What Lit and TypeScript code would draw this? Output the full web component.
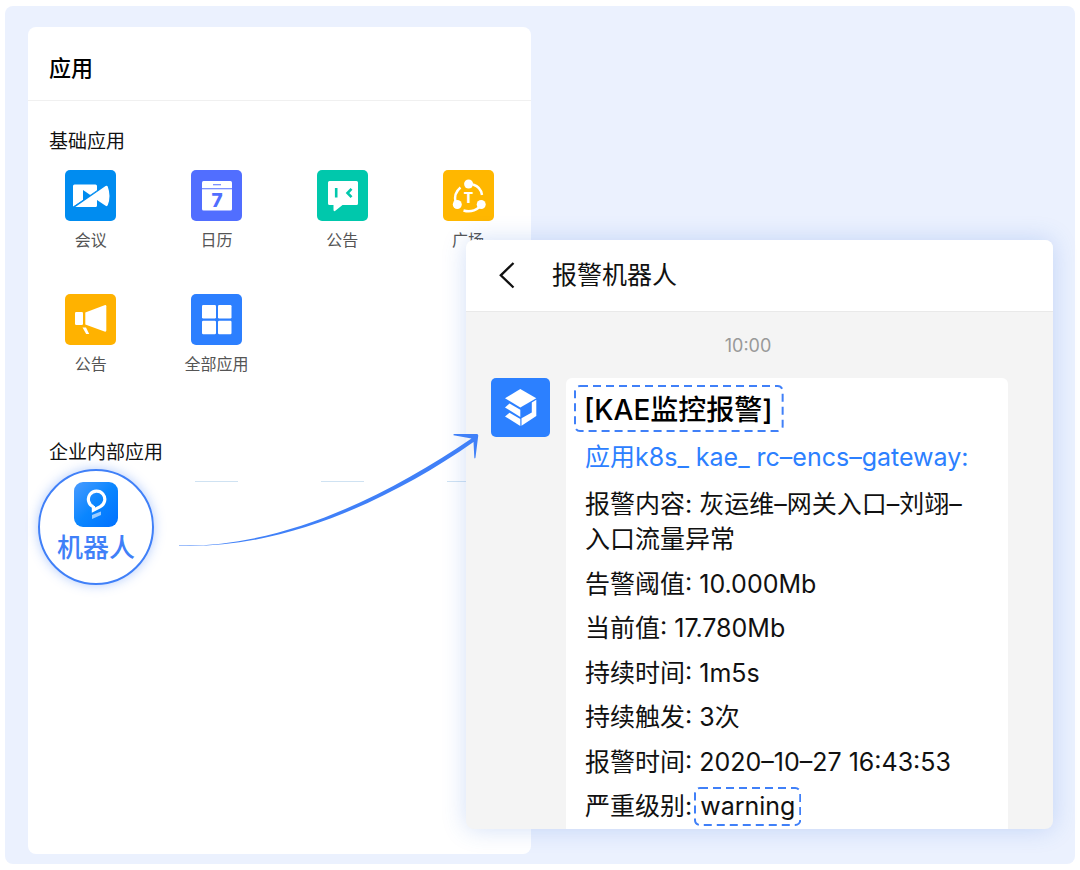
import { LitElement, html, svg, css } from "lit";
import { customElement, property } from "lit/decorators.js";

const icons: Record<string, unknown> = {
  meeting: svg`
    <rect width="51" height="51" rx="5" fill="#008cf0"/>
    <path fill="#fff" d="M9.5 14.5H30.5A1.5 1.5 0 0 1 32 16V20.7L8 36.7V16A1.5 1.5 0 0 1 9.5 14.5Z"/>
    <path fill="#008cf0" d="M18 20L26 25.5L18 31Z"/>
    <path fill="#fff" d="M10.3 37L40.6 16Q42.2 15 42.8 16.7Q46.2 26 42.8 35Q42.2 36.8 40.6 35.8L32 30V35.5A1.5 1.5 0 0 1 30.5 37Z"/>
    <path d="M8 37.2L32 20.6" stroke="#008cf0" stroke-width="0.8"/>`,
  calendar: svg`
    <rect width="51" height="51" rx="5" fill="#516eff"/>
    <rect x="11" y="11" width="30" height="29.5" rx="1.5" fill="#fff"/>
    <path d="M11 18.7H41M22 14.8H30" stroke="#516eff" stroke-width="1.1"/>
    <text x="26" y="36.6" text-anchor="middle" font-size="19" font-weight="800"
      font-family="Inter, sans-serif" fill="#516eff">7</text>`,
  notice: svg`
    <rect width="51" height="51" rx="5" fill="#00c8ac"/>
    <path fill="#fff" d="M12.5 11H39.5A1.5 1.5 0 0 1 41 12.5V33.5A1.5 1.5 0 0 1 39.5 35H25.5L18 41Q16.5 41.5 16.5 40V35H12.5A1.5 1.5 0 0 1 11 33.5V12.5A1.5 1.5 0 0 1 12.5 11Z"/>
    <path d="M19.2 18V27.5M34.5 18.8L30.5 23L34.5 27.2" fill="none" stroke="#00c8ac" stroke-width="2.6"/>`,
  square: svg`
    <rect width="51" height="51" rx="5" fill="#ffb700"/>
    <path d="M17.5 17.5Q10.5 23.5 12.5 32M30 14.5Q38 17 39 25M20.5 40.5Q29 43 36 37.5" fill="none" stroke="#fff" stroke-width="2.4"/>
    <g fill="#fff"><circle cx="25.6" cy="14" r="4.5"/><circle cx="14.3" cy="34.5" r="4.5"/><circle cx="38.2" cy="34.5" r="4.5"/></g>
    <text x="25.6" y="33" text-anchor="middle" font-size="14" font-weight="800"
      font-family="Inter, sans-serif" fill="#fff">T</text>`,
  horn: svg`
    <rect width="51" height="51" rx="5" fill="#ffb200"/>
    <g fill="#fff"><rect x="10" y="18" width="8" height="13" rx="1.2"/>
    <path d="M20.3 18.5L39.5 11.2Q41.3 10.7 41.3 12.2V36.5Q41.3 38 39.5 37.5L20.3 30.5Z"/>
    <path d="M17.5 33.5H21L24.2 40H21.2Z"/></g>`,
  all: svg`
    <rect width="51" height="51" rx="5" fill="#2c7fff"/>
    <g fill="#fff"><rect x="11" y="11" width="14" height="13.5" rx="1.2"/><rect x="27" y="11" width="13.5" height="13.5" rx="1.2"/>
    <rect x="11" y="26.7" width="14" height="13.5" rx="1.2"/><rect x="27" y="26.7" width="13.5" height="13.5" rx="1.2"/></g>`,
};

const apps = [
  { icon: "meeting", name: "会议" },
  { icon: "calendar", name: "日历" },
  { icon: "notice", name: "公告" },
  { icon: "square", name: "广场" },
  { icon: "horn", name: "公告" },
  { icon: "all", name: "全部应用" },
];

const rows = [
  "报警内容: 灰运维–网关入口–刘翊–入口流量异常",
  "告警阈值: 10.000Mb",
  "当前值: 17.780Mb",
  "持续时间: 1m5s",
  "持续触发: 3次",
  "报警时间: 2020–10–27 16:43:53",
];

const base = css`
  * {
    box-sizing: border-box;
    margin: 0;
    padding: 0;
  }
  button {
    border: 0;
    background: none;
    font: inherit;
    color: inherit;
    cursor: pointer;
  }
  svg {
    display: block;
  }
`;

@customElement("dashed-mark")
class DashedMark extends LitElement {
  static styles = css`
    :host {
      position: relative;
      display: inline-block;
    }
    .frame {
      position: absolute;
      inset: 0;
      width: 100%;
      height: 100%;
    }
    .line {
      x: 1px;
      y: 1px;
      width: calc(100% - 2px);
      height: calc(100% - 2px);
      fill: none;
      stroke: #4080f8;
      stroke-width: 2px;
      stroke-dasharray: 8 5;
    }
  `;
  render() {
    return html`<slot></slot>
      <svg class="frame" aria-hidden="true"><rect class="line" rx="5"></rect></svg>`;
  }
}

@customElement("app-tile")
class AppTile extends LitElement {
  @property() icon = "";
  @property() name = "";
  static styles = [
    base,
    css`
      :host {
        display: flex;
        justify-content: center;
      }
      .tile {
        display: flex;
        flex-direction: column;
        align-items: center;
        gap: 8px;
        font-size: 16px;
        line-height: 22px;
        color: #555;
      }
    `,
  ];
  render() {
    return html`<button class="tile">
      <svg width="51" height="51" viewBox="0 0 51 51" aria-hidden="true">${icons[this.icon]}</svg>
      <span>${this.name}</span>
    </button>`;
  }
}

@customElement("alarm-chat")
class AlarmChat extends LitElement {
  static styles = [
    base,
    css`
      :host {
        display: flex;
        flex-direction: column;
        overflow: hidden;
        border-radius: 8px;
        background: #f4f4f4;
        color: #111;
        font-size: 25px;
        font-weight: 400;
        line-height: 35px;
      }
      .bar {
        display: flex;
        align-items: center;
        gap: 34px;
        height: 72px;
        padding-left: 32px;
        background: #fff;
        border-bottom: 1px solid #e9e9e9;
      }
      .title {
        font-size: 25px;
        font-weight: 400;
      }
      .time {
        padding: 24px 23px 22px 0;
        font-size: 18px;
        line-height: 20px;
        text-align: center;
        color: #999;
      }
      .message {
        flex: 1;
        display: flex;
        gap: 16px;
        padding: 0 45px 0 25px;
      }
      .avatar {
        flex: none;
      }
      .bubble {
        flex: 1;
        display: flex;
        flex-direction: column;
        align-items: flex-start;
        padding: 7px 30px 5px 8px;
        background: #fff;
        border-radius: 6px 6px 0 0;
      }
      .name {
        font-size: 28px;
        font-weight: 500;
        line-height: 43px;
        color: #000;
      }
      .name-mark {
        padding: 4px 11px 0 10px;
      }
      .source {
        margin: 8px 0 12px 11px;
        color: #2c80ff;
        text-decoration: none;
      }
      .rows {
        flex: 1;
        display: flex;
        flex-direction: column;
        justify-content: space-between;
        margin-left: 11px;
      }
      .level {
        display: flex;
        align-items: center;
        gap: 2px;
      }
      .level-mark {
        margin: -2px 0;
        padding: 2px 6px;
      }
    `,
  ];
  render() {
    return html`
      <header class="bar">
        <button aria-label="返回">
          <svg width="20" height="30" viewBox="0 0 20 30" fill="none" stroke="#111" stroke-width="2.3">
            <path d="M15.5 2L2.8 14.3L15.5 26.5" />
          </svg>
        </button>
        <h2 class="title">报警机器人</h2>
      </header>
      <div class="time">10:00</div>
      <div class="message">
        <svg class="avatar" width="59" height="59" viewBox="0 0 59 59" aria-hidden="true">
          <rect width="59" height="59" rx="5" fill="#2c80ff" />
          <g fill="#fff">
            <path d="M29.3 11L45.3 20.2L29.3 29.5L14 20.2Z" />
            <path d="M18.5 25.5L29.3 31.8V39L14 29.5Z" />
            <path d="M18.5 34.7L29.3 41V48L14 38.5Z" />
            <path d="M45.3 21.8V38L30.5 47.7V40.3L40.8 34.5V24.5Z" />
          </g>
        </svg>
        <article class="bubble">
          <h3 class="name"><dashed-mark class="name-mark">[KAE监控报警]</dashed-mark></h3>
          <a class="source" href="#gateway">应用k8s_ kae_ rc–encs–gateway:</a>
          <div class="rows">
            ${rows.map((text) => html`<p>${text}</p>`)}
            <p class="level">严重级别:<dashed-mark class="level-mark">warning</dashed-mark></p>
          </div>
        </article>
      </div>
    `;
  }
}

@customElement("app-root")
class AppRoot extends LitElement {
  static styles = [
    base,
    css`
      :host {
        display: flex;
        min-height: 100vh;
        box-sizing: border-box;
        padding: 6px 5px;
        background: #fff;
        font-family: Inter, "Noto Sans CJK SC", sans-serif;
      }
      .stage {
        position: relative;
        flex: 1;
        display: flex;
        padding: 21px 23px 10px;
        background: #ebf1fe;
        border-radius: 8px;
      }
      .card {
        width: 503px;
        background: #fff;
        border-radius: 8px;
      }
      .head {
        height: 74px;
        padding: 0 21px;
        border-bottom: 1px solid #f0f0f0;
        font-size: 22px;
        font-weight: 500;
        line-height: 82px;
        color: #000;
      }
      .section {
        padding: 0 21px;
        font-size: 19px;
        font-weight: 400;
        line-height: 26px;
        color: #111;
      }
      .basic {
        margin-top: 28px;
      }
      .inner {
        margin-top: 65px;
      }
      .grid {
        display: grid;
        grid-template-columns: repeat(4, 1fr);
      }
      .apps {
        margin-top: 15px;
        row-gap: 43px;
      }
      .slots {
        margin-top: 3px;
        justify-items: center;
      }
      .robot {
        display: flex;
        flex-direction: column;
        align-items: center;
        gap: 3px;
        width: 116px;
        height: 116px;
        margin-left: 10px;
        padding-top: 11px;
        border: 2px solid #4080f8;
        border-radius: 50%;
        background: #fff;
        box-shadow: 0 0 12px rgba(64, 128, 248, 0.4);
        color: #4080f8;
        font-size: 26px;
        font-weight: 500;
        line-height: 36px;
      }
      .stub {
        width: 43px;
        height: 1px;
        margin-top: 12px;
        background: #cfe2f2;
      }
      .chat {
        position: absolute;
        inset: 234px 22px 35px 461px;
        box-shadow: 0 0 24px rgba(50, 110, 220, 0.22);
      }
      .arrow {
        position: absolute;
        left: 170px;
        top: 424px;
        pointer-events: none;
      }
    `,
  ];
  render() {
    return html`
      <main class="stage">
        <section class="card">
          <h1 class="head">应用</h1>
          <h2 class="section basic">基础应用</h2>
          <div class="grid apps">
            ${apps.map((a) => html`<app-tile .icon=${a.icon} .name=${a.name}></app-tile>`)}
          </div>
          <h2 class="section inner">企业内部应用</h2>
          <div class="grid slots">
            <button class="robot">
              <svg width="44" height="45" viewBox="0 0 44 45" aria-hidden="true">
                <defs>
                  <linearGradient id="g" x1="0" y1="0" x2="1" y2="1">
                    <stop offset="0" stop-color="#4a9bff" />
                    <stop offset=".5" stop-color="#0a86ff" />
                    <stop offset="1" stop-color="#0070ff" />
                  </linearGradient>
                </defs>
                <rect width="44" height="45" rx="9" fill="url(#g)" />
                <path d="M19.3 24.8A8.2 8.2 0 1 1 26.3 24.6L19.4 28.2V24" fill="none" stroke="#fff" stroke-width="3.2" />
                <path d="M18 33L27 29.5V33L18 37Z" fill="#fff" opacity=".6" />
              </svg>
              <span>机器人</span>
            </button>
            <i class="stub"></i><i class="stub"></i><i class="stub"></i>
          </div>
        </section>
        <alarm-chat class="chat"></alarm-chat>
        <svg class="arrow" width="310" height="124" viewBox="175 430 310 124" aria-hidden="true">
          <path
            fill="#4080f8"
            d="M179 545.5C280 548 386 497 471.5 438.5L453.5 435.2Q453 434.2 454.5 434L477 434Q478.500 434.3 478.2 436L475.5 457.5Q474.8 459.5 474.3 457.5L473.5 442C388 502 280 549.500 179 545.9Z"
          />
        </svg>
      </main>
    `;
  }
}
